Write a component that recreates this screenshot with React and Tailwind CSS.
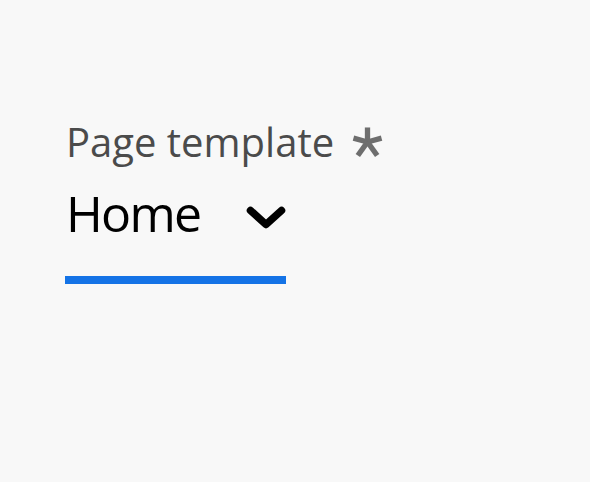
export default function App() {
  return (
    <div className="w-[590px] h-[482px] bg-[#f8f8f8] pt-[114px] pl-[66px]" style={{ fontFamily: '"Open Sans", sans-serif' }}>
      <div className="flex flex-col">
        <div className="flex items-center h-[56px] text-[40px] leading-[56px] text-[#4b4b4b]">
          <span>Page template</span>
          <svg className="ml-[18px] -mt-[1px]" width="31" height="32" viewBox="0 0 32 32">
            <g stroke="#6e6e6e" strokeWidth="5.5" strokeLinecap="butt" fill="none">
              <line x1="16" y1="16" x2="16" y2="1" />
              <line x1="16" y1="16" x2="1.5" y2="12" />
              <line x1="16" y1="16" x2="30.5" y2="12" />
              <line x1="16" y1="16" x2="6" y2="30" />
              <line x1="16" y1="16" x2="26" y2="30" />
            </g>
          </svg>
        </div>
        <button className="mt-[10px] w-[221px] -ml-[1px] flex flex-col">
          <div className="flex items-center justify-between h-[66px] pl-[1px]">
            <span className="text-[50px] leading-[66px] text-black tracking-[-1.75px]">Home</span>
            <svg width="40" height="24" viewBox="0 0 40 24" className="mt-[10px]">
              <polyline points="4.5,4.5 20,18.5 35.5,4.5" fill="none" stroke="#000" strokeWidth="7.5" strokeLinecap="round" strokeLinejoin="round" />
            </svg>
          </div>
          <div className="mt-[30px] h-[8px] w-full bg-[#1473e6]" />
        </button>
      </div>
    </div>
  );
}
